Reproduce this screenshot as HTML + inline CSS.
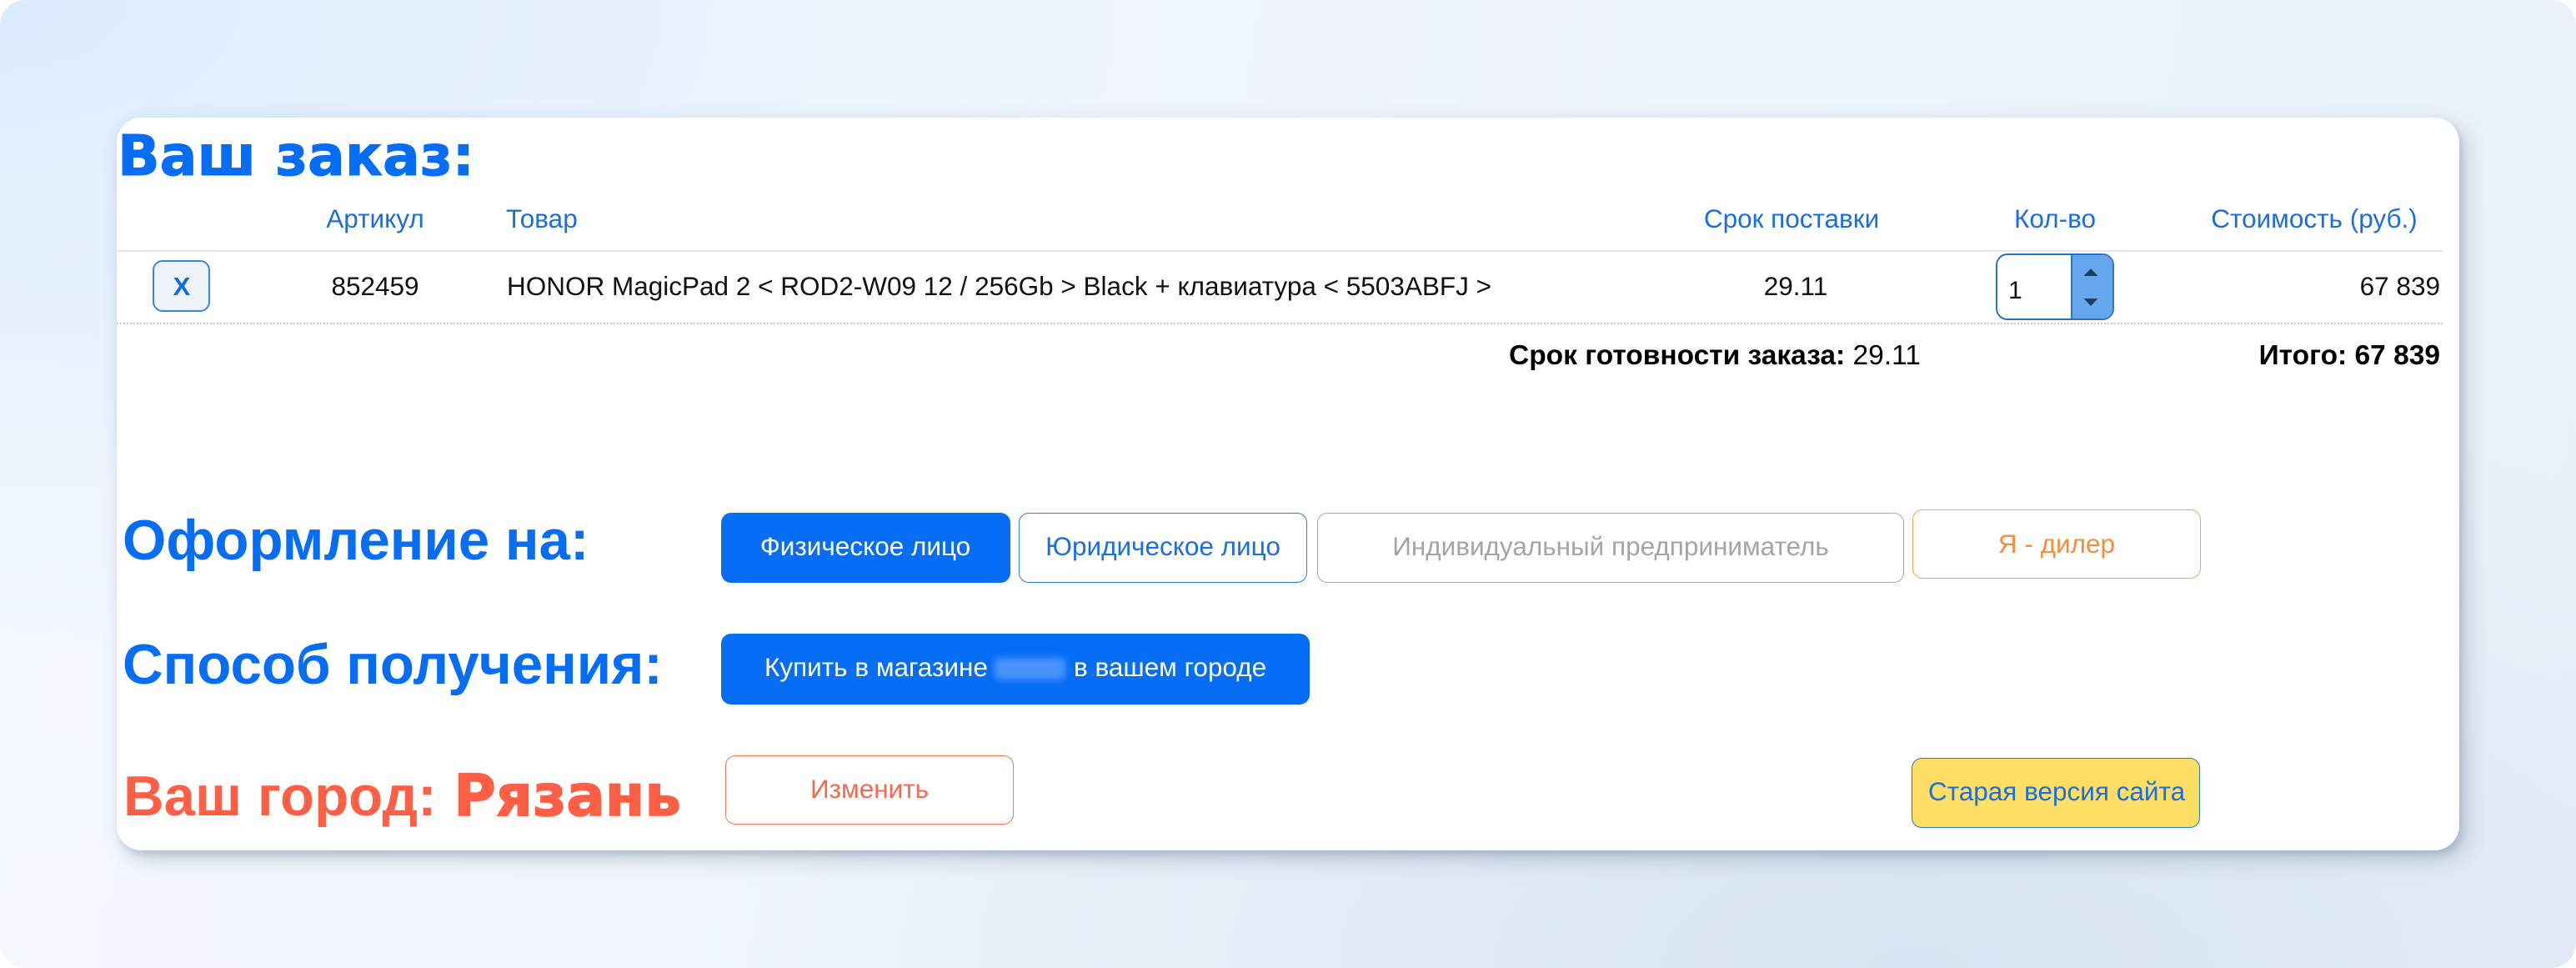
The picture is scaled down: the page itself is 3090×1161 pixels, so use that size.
<!DOCTYPE html>
<html lang="ru"><head><meta charset="utf-8"><title>Ваш заказ</title>
<style>
html,body{margin:0;padding:0;width:3090px;height:1161px;background:#fff;overflow:hidden}
#bg{position:absolute;left:0;top:0;width:3090px;height:1161px;border-radius:30px;overflow:hidden;
background:
radial-gradient(1500px 700px at 2300px 1161px,#d8e4f3 0%,rgba(216,228,243,0) 100%),
radial-gradient(1400px 800px at 0px 0px,#dcecfe 0%,rgba(220,236,254,0) 100%),
linear-gradient(100deg,#f5f9ff 0%,#eaf1fa 100%)}
#card{position:absolute;left:140px;top:141px;width:2810px;height:879px;background:#fff;border-radius:30px;box-shadow:8px 10px 26px rgba(60,80,110,.26),3px 5px 8px rgba(60,80,110,.16)}
.t{position:absolute;white-space:nowrap;line-height:1;font-family:"Liberation Sans",sans-serif}
.c{transform:translateX(-50%)}
.r{transform:translateX(-100%)}
.b{font-weight:700}
.d{font-family:"DejaVu Sans",sans-serif;font-weight:700}
.h{font-size:31.5px;color:#1a6fdc}
.v{font-size:31.5px;color:#111}
.f{font-size:33.5px;color:#000}
.big{font-size:67.3px;font-weight:700;color:#066df5}
.btn{position:absolute;box-sizing:border-box;border-radius:12px}
.bt{font-size:31.5px}
</style></head><body>
<div id="bg"></div>
<div id="card"></div>

<div class="t d" style="left:141px;top:154px;font-size:66.5px;color:#066df5;-webkit-text-stroke:1px #066df5">Ваш заказ:</div>

<div class="t h c" style="left:450px;top:247px">Артикул</div>
<div class="t h" style="left:607px;top:247px">Товар</div>
<div class="t h c" style="left:2149px;top:247px">Срок поставки</div>
<div class="t h c" style="left:2465px;top:247px">Кол-во</div>
<div class="t h c" style="left:2776px;top:247px">Стоимость (руб.)</div>

<div style="position:absolute;left:140px;top:300px;width:2790px;height:2px;background:#e6e6e6"></div>
<div style="position:absolute;left:140px;top:387px;width:2790px;height:0;border-top:2px dotted #c4c4c4"></div>

<div class="btn" style="left:183px;top:312px;width:69px;height:62px;background:#eef3fc;border:2px solid #3a86e4"></div>
<div class="t b c" style="left:218px;top:328px;font-size:31px;color:#0a6df0">X</div>

<div class="t v c" style="left:450px;top:328px">852459</div>
<div class="t v" style="left:608px;top:328px">HONOR MagicPad 2 &lt; ROD2-W09 12 / 256Gb &gt; Black + клавиатура &lt; 5503ABFJ &gt;</div>
<div class="t v c" style="left:2154px;top:328px">29.11</div>

<div style="position:absolute;left:2394px;top:304px;width:142px;height:80px;box-sizing:border-box;border:2px solid #2a72c4;border-radius:14px;overflow:hidden;background:#fff">
  <div style="position:absolute;left:88px;top:0;width:52px;height:76px;background:#66a6ee;border-left:2px solid #3f6fa8"></div>
</div>
<div class="t v" style="left:2409px;top:334px;font-size:30px">1</div>
<svg style="position:absolute;left:2498px;top:318px" width="20" height="54" viewBox="0 0 20 54">
  <path d="M10 4L18.5 13H1.5Z" fill="#1c3f66"/><path d="M1.5 40H18.5L10 49Z" fill="#1c3f66"/>
</svg>

<div class="t v r" style="left:2927px;top:328px">67 839</div>

<div class="t f" style="left:1810px;top:410px"><span class="b">Срок готовности заказа:</span> 29.11</div>
<div class="t f b r" style="left:2927px;top:410px">Итого: 67 839</div>

<div class="t big" style="left:147px;top:615px">Оформление на:</div>
<div class="t big" style="left:147px;top:764px">Способ получения:</div>
<div class="t big" style="left:148px;top:921px;color:#ff5f45">Ваш город: <span class="d" style="font-size:69px;margin-left:2px;-webkit-text-stroke:1.5px #ff5f45">Рязань</span></div>

<div class="btn" style="left:865px;top:615px;width:347px;height:84px;background:#066df5"></div>
<div class="t bt c" style="left:1038px;top:640px;color:#fff">Физическое лицо</div>

<div class="btn" style="left:1222px;top:615px;width:346px;height:84px;background:#fff;border:1.5px solid #2a7ce0"></div>
<div class="t bt c" style="left:1395px;top:640px;color:#1a6fdc">Юридическое лицо</div>

<div class="btn" style="left:1580px;top:615px;width:704px;height:84px;background:#fff;border:1.5px solid #ababab"></div>
<div class="t bt c" style="left:1932px;top:640px;color:#a5a5a5">Индивидуальный предприниматель</div>

<div class="btn" style="left:2294px;top:611px;width:346px;height:83px;background:#fff;border:1.5px solid #f9a055"></div>
<div class="t bt c" style="left:2467px;top:637px;color:#f98c3c">Я - дилер</div>

<div class="btn" style="left:865px;top:760px;width:706px;height:85px;background:#066df5"></div>
<div class="t bt" style="left:917px;top:785px;color:#fff">Купить в магазине</div>
<div style="position:absolute;left:1193px;top:789px;width:85px;height:26px;background:#4a93fb;border-radius:6px;filter:blur(4px)"></div>
<div class="t bt" style="left:1288px;top:785px;color:#fff">в вашем городе</div>

<div class="btn" style="left:870px;top:906px;width:346px;height:83px;background:#fff;border:1.5px solid #f9725a"></div>
<div class="t bt c" style="left:1043px;top:931px;color:#f9684e">Изменить</div>

<div class="btn" style="left:2293px;top:909px;width:346px;height:84px;background:#ffde66;border:1.5px solid #2a7ab8"></div>
<div class="t bt c" style="left:2467px;top:934px;color:#1a6fdc">Старая версия сайта</div>
</body></html>
